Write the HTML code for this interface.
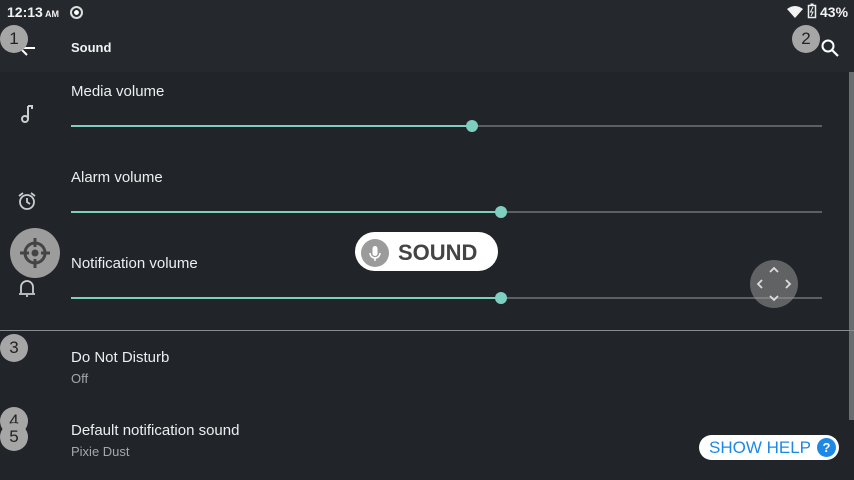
<!DOCTYPE html>
<html><head><meta charset="utf-8"><style>
*{margin:0;padding:0;box-sizing:border-box}
body{width:854px;height:480px;overflow:hidden;background:#212529;font-family:"Liberation Sans",sans-serif;color:#e8eaeb;position:relative}
.abs{position:absolute}
.top{left:0;top:0;width:854px;height:72px;background:#25292d}
.t{font-size:15px;color:#eceeef}
.s{font-size:13px;color:#a4a8ab}
.track{height:2px;background:#5c6063}
.fill{height:2px;background:#7ecfc0}
.knob{width:12px;height:12px;border-radius:50%;background:#7ecfc0}
.num{width:28px;height:28px;border-radius:50%;background:#a6a6a6;color:#222;font-size:17px;text-align:center;line-height:27px}
</style></head><body>
<div class="abs top"></div>
<div class="abs" style="left:7px;top:4px;font-size:14px;font-weight:bold;color:#f2f2f2">12:13<span style="font-size:9px"> AM</span></div>
<div class="abs" style="left:70px;top:6px;width:13px;height:13px;border-radius:50%;border:2px solid #ddd;background:radial-gradient(#fff 35%,transparent 40%)"></div>
<svg class="abs" style="left:786px;top:5px" width="18" height="14" viewBox="0 0 18 14"><path d="M1 4Q9-2 17 4L9 13Z" fill="#f2f2f2"/></svg>
<svg class="abs" style="left:807px;top:3px" width="10" height="16" viewBox="0 0 10 16"><rect x="1.5" y="2.5" width="7" height="12" fill="none" stroke="#eee" stroke-width="1.5"/><rect x="3.5" y="0.5" width="3" height="2" fill="#eee"/><path d="M6 4L3.5 9H6L4 13" stroke="#eee" fill="none"/></svg>
<div class="abs" style="left:820px;top:4px;font-size:14px;font-weight:bold;color:#f2f2f2">43%</div>
<svg class="abs" style="left:18px;top:39px" width="18" height="18" viewBox="0 0 18 18"><path d="M17 9H2M9 2L2 9l7 7" stroke="#fff" stroke-width="2" fill="none"/></svg>
<div class="abs" style="left:71px;top:40px;font-size:13px;font-weight:bold;color:#f2f2f2">Sound</div>
<svg class="abs" style="left:820px;top:38px" width="20" height="20" viewBox="0 0 20 20"><circle cx="8" cy="8" r="5.5" stroke="#fff" stroke-width="2" fill="none"/><path d="M12 12l6 6" stroke="#fff" stroke-width="2.2"/></svg>
<div class="abs" style="left:849px;top:72px;width:5px;height:348px;background:#6a6d70"></div>

<div class="abs t" style="left:71px;top:83px">Media volume</div>
<svg class="abs" style="left:20px;top:104px" width="14" height="20" viewBox="0 0 14 20"><path d="M8 2v13" stroke="#ccc" stroke-width="2"/><path d="M8 2h4v3" stroke="#ccc" stroke-width="2" fill="none"/><circle cx="5" cy="15" r="3" stroke="#ccc" stroke-width="2" fill="none"/></svg>
<div class="abs track" style="left:71px;top:125px;width:751px"></div>
<div class="abs fill" style="left:71px;top:125px;width:401px"></div>
<div class="abs knob" style="left:466px;top:120px"></div>

<div class="abs t" style="left:71px;top:169px">Alarm volume</div>
<svg class="abs" style="left:16px;top:190px" width="22" height="22" viewBox="0 0 22 22"><circle cx="11" cy="12" r="7" stroke="#ccc" stroke-width="1.8" fill="none"/><path d="M11 8v4l3 2M3 6l4-3M19 6l-4-3" stroke="#ccc" stroke-width="1.8" fill="none"/></svg>
<div class="abs track" style="left:71px;top:211px;width:751px"></div>
<div class="abs fill" style="left:71px;top:211px;width:430px"></div>
<div class="abs knob" style="left:495px;top:206px"></div>

<div class="abs t" style="left:71px;top:255px">Notification volume</div>
<svg class="abs" style="left:17px;top:278px" width="20" height="20" viewBox="0 0 20 20"><path d="M4 15V9a6 6 0 0112 0v6M2 16h16M9 18h2" stroke="#ccc" stroke-width="1.8" fill="none"/></svg>
<div class="abs track" style="left:71px;top:297px;width:751px"></div>
<div class="abs fill" style="left:71px;top:297px;width:430px"></div>
<div class="abs knob" style="left:495px;top:292px"></div>

<div class="abs" style="left:10px;top:228px;width:50px;height:50px;border-radius:50%;background:#9c9c9c"></div>
<svg class="abs" style="left:17px;top:235px" width="36" height="36" viewBox="0 0 36 36"><circle cx="18" cy="18" r="10" stroke="#444" stroke-width="3" fill="none"/><circle cx="18" cy="18" r="3.5" fill="#444"/><path d="M18 3v9M18 24v9M3 18h9M24 18h9" stroke="#444" stroke-width="3"/></svg>

<div class="abs" style="left:750px;top:260px;width:48px;height:48px;border-radius:50%;background:rgba(150,150,150,.55)"></div>
<svg class="abs" style="left:750px;top:260px" width="48" height="48" viewBox="0 0 48 48"><path d="M20 12l4-4 4 4M20 36l4 4 4-4M12 20l-4 4 4 4M36 20l4 4-4 4" stroke="#ddd" stroke-width="1.8" fill="none"/></svg>

<div class="abs" style="left:355px;top:232px;width:143px;height:39px;border-radius:20px;background:#fff"></div>
<div class="abs" style="left:361px;top:239px;width:28px;height:28px;border-radius:50%;background:#9b9b9b"></div>
<svg class="abs" style="left:361px;top:239px" width="28" height="28" viewBox="0 0 28 28"><rect x="11.5" y="7" width="5" height="10" rx="2.5" fill="#fff"/><path d="M9 14a5 5 0 0010 0M14 19v3" stroke="#fff" stroke-width="1.5" fill="none"/></svg>
<div class="abs" style="left:398px;top:240px;font-size:22px;font-weight:bold;color:#444">SOUND</div>

<div class="abs" style="left:0;top:330px;width:854px;height:1px;background:#8a8d90"></div>
<div class="abs t" style="left:71px;top:349px">Do Not Disturb</div>
<div class="abs s" style="left:71px;top:371px">Off</div>
<div class="abs t" style="left:71px;top:422px">Default notification sound</div>
<div class="abs s" style="left:71px;top:444px">Pixie Dust</div>

<div class="abs" style="left:699px;top:435px;width:140px;height:25px;border-radius:13px;background:#fff"></div>
<div class="abs" style="left:709px;top:438px;font-size:17px;color:#1e88e5">SHOW HELP</div>
<div class="abs" style="left:817px;top:438px;width:19px;height:19px;border-radius:50%;background:#1e88e5;color:#fff;font-size:13px;font-weight:bold;text-align:center;line-height:19px">?</div>

<div class="abs num" style="left:0;top:25px">1</div>
<div class="abs num" style="left:792px;top:25px">2</div>
<div class="abs num" style="left:0;top:334px">3</div>
<div class="abs num" style="left:0;top:407px">4</div>
<div class="abs num" style="left:0;top:423px">5</div>
</body></html>
